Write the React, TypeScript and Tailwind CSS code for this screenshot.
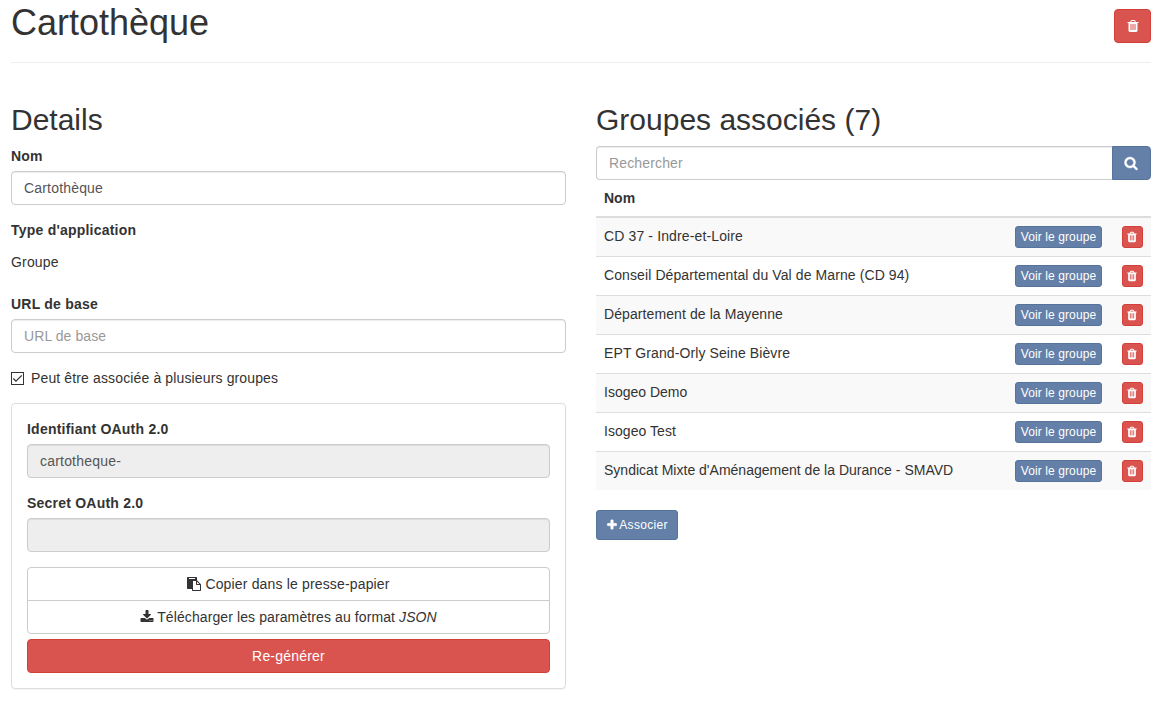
import React from "react";

const icons = {
  trash:
    "M704 1376v-704q0-14-9-23t-23-9h-64q-14 0-23 9t-9 23v704q0 14 9 23t23 9h64q14 0 23-9t9-23zm256 0v-704q0-14-9-23t-23-9h-64q-14 0-23 9t-9 23v704q0 14 9 23t23 9h64q14 0 23-9t9-23zm256 0v-704q0-14-9-23t-23-9h-64q-14 0-23 9t-9 23v704q0 14 9 23t23 9h64q14 0 23-9t9-23zm-544-992h448l-48-117q-7-9-17-11h-317q-10 2-17 11zm928 32v64q0 14-9 23t-23 9h-96v948q0 83-47 143.5t-113 60.5h-832q-66 0-113-58.5t-47-141.5v-952h-96q-14 0-23-9t-9-23v-64q0-14 9-23t23-9h309l70-167q15-37 54-63t79-26h320q40 0 79 26t54 63l70 167h309q14 0 23 9t9 23z",
  search:
    "M1216 832q0-185-131.5-316.5t-316.5-131.5-316.5 131.5-131.5 316.5 131.5 316.5 316.5 131.5 316.5-131.5 131.5-316.5zm512 832q0 52-38 90t-90 38q-54 0-90-38l-343-342q-179 124-399 124-143 0-273.5-55.5t-225-150-150-225-55.5-273.5 55.5-273.5 150-225 225-150 273.5-55.5 273.5 55.5 225 150 150 225 55.5 273.5q0 220-124 399l343 343q37 37 37 90z",
  download:
    "M1344 1344q0-26-19-45t-45-19-45 19-19 45 19 45 45 19 45-19 19-45zm256 0q0-26-19-45t-45-19-45 19-19 45 19 45 45 19 45-19 19-45zm128-224v320q0 40-28 68t-68 28h-1472q-40 0-68-28t-28-68v-320q0-40 28-68t68-28h465l135 136q58 56 136 56t136-56l136-136h464q40 0 68 28t28 68zm-325-569q17 41-14 70l-448 448q-18 19-45 19t-45-19l-448-448q-31-29-14-70 17-39 59-39h256v-448q0-26 19-45t45-19h256q26 0 45 19t19 45v448h256q42 0 59 39z",
  paste:
    "M768 1664h896v-640h-416q-40 0-68-28t-28-68v-416h-384v1152zm256-1440v-64q0-13-9.5-22.5t-22.5-9.5h-704q-13 0-22.5 9.5t-9.5 22.5v64q0 13 9.5 22.5t22.5 9.5h704q13 0 22.5-9.5t9.5-22.5zm256 672h299l-299-299v299zm512 128v672q0 40-28 68t-68 28h-960q-40 0-68-28t-28-68v-160h-544q-40 0-68-28t-28-68v-1344q0-40 28-68t68-28h1088q40 0 68 28t28 68v328q21 13 36 28l408 408q28 28 48 76t20 88z",
  plus: "M1600 736v192q0 40-28 68t-68 28h-416v416q0 40-28 68t-68 28h-192q-40 0-68-28t-28-68v-416h-416q-40 0-68-28t-28-68v-192q0-40 28-68t68-28h416v-416q0-40 28-68t68-28h192q40 0 68 28t28 68v416h416q40 0 68 28t28 68z",
};

function Icon({ name, className }: { name: keyof typeof icons; className: string }) {
  return (
    <svg viewBox="0 0 1792 1792" fill="currentColor" className={`shrink-0 overflow-visible ${className}`} aria-hidden="true">
      <path d={icons[name]} />
    </svg>
  );
}

const inputClass =
  "block h-[34px] w-full rounded-[4px] border border-[#ccc] px-3 text-[14px] leading-5 text-[#555] placeholder-[#999] shadow-[inset_0_1px_1px_rgba(0,0,0,0.075)] outline-none";

function Field({ label, children }: { label: string; children: React.ReactNode }) {
  return (
    <div className="mb-[15px]">
      <div className="mb-[5px] font-bold tracking-[0.22px]">{label}</div>
      {children}
    </div>
  );
}

const groups = [
  { name: "CD 37 - Indre-et-Loire", tracking: "tracking-[0.13px]" },
  { name: "Conseil Départemental du Val de Marne (CD 94)", tracking: "tracking-[0.1px]" },
  { name: "Département de la Mayenne", tracking: "tracking-[0.09px]" },
  { name: "EPT Grand-Orly Seine Bièvre", tracking: "tracking-[0.1px]" },
  { name: "Isogeo Demo", tracking: "tracking-normal" },
  { name: "Isogeo Test", tracking: "tracking-[0.05px]" },
  { name: "Syndicat Mixte d'Aménagement de la Durance - SMAVD", tracking: "tracking-[0.01px]" },
];

export default function App() {
  return (
    <div className="h-[707px] w-[1167px] overflow-hidden bg-white pl-[11px] pr-4 font-['Liberation_Sans',Arial,sans-serif] text-[14px] leading-5 text-[#333]">
      <header className="flex h-[63px] items-start justify-between border-b border-[#eee]">
        <h1 className="mt-[3px] text-[36px] leading-[40px]">Cartothèque</h1>
        <button aria-label="Supprimer" className="mt-[9px] flex h-[34px] w-[37px] items-center justify-center rounded-[4px] border border-[#d43f3a] bg-[#d9534f] text-white">
          <Icon name="trash" className="h-[14px] w-[14px]" />
        </button>
      </header>

      <main className="mt-10 grid grid-cols-2 gap-[30px]">
        <section>
          <h2 className="mb-[10px] text-[30px] leading-[33px]">Details</h2>
          <Field label="Nom">
            <input className={`${inputClass} tracking-[0.18px]`} defaultValue="Cartothèque" />
          </Field>
          <Field label="Type d'application">
            <p className="py-[7px] tracking-[0.17px]">Groupe</p>
          </Field>
          <Field label="URL de base">
            <input className={`${inputClass} tracking-[0.08px]`} placeholder="URL de base" />
          </Field>
          <label className="mb-[15px] flex items-center tracking-[0.135px]">
            <svg viewBox="0 0 13 13" className="mr-[7px] h-[13px] w-[13px]" fill="none" stroke="#333">
              <rect x="0.5" y="0.5" width="12" height="12" />
              <path d="M2.3 6.5 5 9.2 10.8 3.4" strokeWidth="1.3" />
            </svg>
            Peut être associée à plusieurs groupes
          </label>
          <div className="rounded-[4px] border border-[#ddd] p-[15px] shadow-[0_1px_1px_rgba(0,0,0,0.05)]">
            <Field label="Identifiant OAuth 2.0">
              <input readOnly className={`${inputClass} bg-[#eee] tracking-[0.2px]`} defaultValue="cartotheque-" />
            </Field>
            <Field label="Secret OAuth 2.0">
              <input readOnly className={`${inputClass} bg-[#eee]`} />
            </Field>
            <button className="flex h-[34px] w-full items-center justify-center rounded-t-[4px] border border-[#ccc] tracking-[0.16px]">
              <Icon name="paste" className="mr-1 h-[14px] w-[14px]" />
              Copier dans le presse-papier
            </button>
            <button className="-mt-px flex h-[34px] w-full items-center justify-center rounded-b-[4px] border border-[#ccc] tracking-[0.1px]">
              <Icon name="download" className="mr-[3px] h-[14px] w-[14px]" />
              <span>
                Télécharger les paramètres au format <em>JSON</em>
              </span>
            </button>
            <button className="mt-[5px] flex h-[34px] w-full items-center justify-center rounded-[4px] border border-[#d43f3a] bg-[#d9534f] tracking-[0.2px] text-white">
              Re-générer
            </button>
          </div>
        </section>

        <section>
          <h2 className="mb-[10px] text-[30px] leading-[33px]">Groupes associés (7)</h2>
          <div className="flex">
            <input
              className="h-[34px] min-w-0 flex-1 rounded-l-[4px] border border-r-0 border-[#ccc] px-3 tracking-[0.15px] text-[#555] placeholder-[#999] shadow-[inset_0_1px_1px_rgba(0,0,0,0.075)] outline-none"
              placeholder="Rechercher"
            />
            <button aria-label="Rechercher" className="flex h-[34px] w-[39px] items-center justify-center rounded-r-[4px] border border-[#56739b] bg-[#6480a9] pr-px text-white">
              <Icon name="search" className="h-[14px] w-[14px] stroke-current stroke-[50]" />
            </button>
          </div>
          <div className="flex h-[38px] items-start border-b-2 border-[#ddd] px-2 pt-2 font-bold">Nom</div>
          <ul className="divide-y divide-[#ddd]">
            {groups.map(({ name, tracking }) => (
              <li key={name} className="flex h-[39px] items-start px-2 pt-2 last:h-[38px] odd:bg-[#f9f9f9]">
                <span className={`flex-1 ${tracking}`}>{name}</span>
                <button className="mr-5 flex h-[22px] w-[87px] items-center justify-center whitespace-nowrap rounded-[3px] border border-[#56739b] bg-[#6480a9] text-[12px] leading-[18px] tracking-[0.1px] text-white">
                  Voir le groupe
                </button>
                <button aria-label="Retirer" className="flex h-[22px] w-[21px] items-center justify-center rounded-[3px] border border-[#d43f3a] bg-[#d9534f] pr-px text-white">
                  <Icon name="trash" className="h-3 w-3" />
                </button>
              </li>
            ))}
          </ul>
          <button className="mt-5 flex h-[30px] w-[82px] items-center justify-center rounded-[3px] border border-[#56739b] bg-[#6480a9] text-[12px] leading-[18px] tracking-[0.3px] text-white">
            <Icon name="plus" className="mr-px h-3 w-3 stroke-current stroke-[60]" />
            Associer
          </button>
        </section>
      </main>
    </div>
  );
}
